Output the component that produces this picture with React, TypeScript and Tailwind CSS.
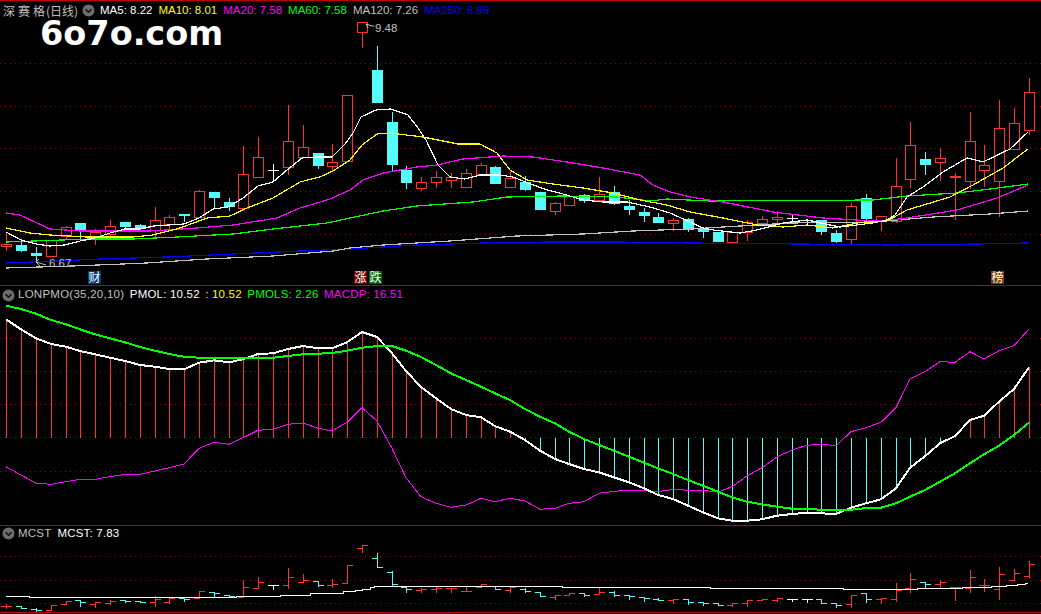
import React from 'react';

const RED = '#ff3232';
const CYAN = '#54fcfc';
const WHITE = '#ffffff';
const GRID = '#8f0000';

const barX = (i: number) => Math.round(6.3 + 14.82 * i);

// [body top, body bottom, wick top, wick bottom, colour]
type Candle = [number, number, number, number, 'r' | 'c' | 'w'];
const candles: Candle[] = [
  [244, 247, 233, 251, 'r'], [245, 251, 239, 252, 'c'], [253, 256, 247, 262, 'c'], [240, 257, 240, 257, 'r'],
  [227, 237, 226, 240, 'r'], [223, 230, 223, 241, 'c'], [232, 237, 229, 245, 'r'], [226, 235, 220, 237, 'r'],
  [222, 227, 222, 231, 'c'], [225, 229, 224, 231, 'c'], [220, 231, 207, 239, 'r'], [217, 225, 215, 229, 'r'],
  [214, 216, 214, 222, 'c'], [191, 218, 190, 218, 'r'], [192, 198, 192, 208, 'c'], [202, 207, 198, 211, 'c'],
  [174, 209, 146, 211, 'r'], [157, 178, 137, 178, 'r'], [170, 170, 164, 182, 'w'], [141, 168, 105, 175, 'r'],
  [147, 158, 125, 158, 'r'], [153, 166, 153, 169, 'c'], [162, 167, 144, 172, 'r'], [95, 162, 95, 162, 'r'],
  [22, 33, 22, 48, 'r'], [70, 103, 46, 103, 'c'], [122, 165, 112, 172, 'c'], [170, 183, 166, 189, 'c'],
  [182, 189, 177, 191, 'r'], [177, 183, 171, 188, 'r'], [177, 181, 173, 188, 'r'], [173, 188, 169, 188, 'r'],
  [165, 175, 163, 175, 'r'], [167, 184, 166, 184, 'c'], [178, 188, 172, 188, 'r'], [182, 190, 176, 191, 'c'],
  [192, 210, 192, 210, 'c'], [203, 212, 202, 215, 'r'], [196, 206, 196, 206, 'r'], [195, 201, 194, 203, 'c'],
  [194, 201, 177, 202, 'r'], [192, 204, 186, 205, 'c'], [206, 210, 200, 215, 'c'], [212, 216, 208, 222, 'c'],
  [217, 223, 213, 223, 'c'], [220, 224, 218, 231, 'r'], [219, 230, 218, 232, 'c'], [229, 232, 227, 238, 'c'],
  [232, 242, 232, 242, 'c'], [232, 243, 232, 243, 'r'], [222, 233, 220, 241, 'r'], [219, 224, 216, 224, 'r'],
  [217, 220, 211, 223, 'r'], [218, 218, 214, 224, 'w'], [220, 220, 220, 224, 'w'], [220, 232, 220, 235, 'c'],
  [233, 242, 230, 243, 'c'], [206, 240, 203, 244, 'r'], [198, 219, 194, 223, 'c'], [216, 221, 216, 231, 'r'],
  [186, 222, 158, 223, 'r'], [145, 180, 122, 188, 'r'], [159, 165, 152, 175, 'c'], [158, 163, 148, 181, 'r'],
  [176, 178, 173, 220, 'r'], [141, 182, 112, 189, 'r'], [165, 171, 145, 187, 'r'], [128, 182, 100, 217, 'r'],
  [123, 150, 108, 150, 'r'], [92, 131, 78, 135, 'r'],
];

const colourOf = (c: string) => (c === 'r' ? RED : c === 'c' ? CYAN : WHITE);

type Pt = [number, number];
const ma5: Pt[] = [[6,232],[21,240],[36,244],[50,246],[65,245],[80,241],[95,238],[110,233],[125,229],[139,229],[154,226],[169,225],[184,224],[199,218],[213,209],[228,207],[243,198],[258,186],[273,182],[287,170],[302,158],[317,157],[332,157],[345,144],[353,133],[361,117],[376,110],[391,109],[408,115],[418,128],[426,140],[438,165],[450,177],[465,179],[480,175],[500,175],[513,177],[528,183],[547,190],[563,194],[583,200],[603,202],[627,202],[650,207],[670,213],[690,222],[703,228],[713,230],[740,233],[757,230],[783,223],[807,220],[830,225],[840,227],[873,223],[887,220],[895,215],[907,197],[923,187],[943,172],[967,158],[983,162],[1010,149],[1028,132]];
const ma10: Pt[] = [[6,228],[30,233],[50,235],[87,237],[133,237],[153,235],[180,228],[207,218],[230,216],[247,208],[273,198],[300,182],[320,177],[333,171],[350,160],[362,145],[377,134],[390,133],[423,137],[458,144],[480,144],[497,153],[510,170],[527,180],[553,184],[583,188],[613,193],[640,200],[667,205],[690,212],[723,218],[757,225],[783,227],[807,225],[833,228],[857,223],[887,221],[907,210],[950,197],[973,185],[1003,168],[1028,149]];
const ma20: Pt[] = [[6,213],[20,215],[37,223],[50,229],[80,231],[150,231],[197,228],[233,225],[277,218],[300,208],[330,199],[350,190],[363,180],[383,173],[417,167],[437,165],[463,159],[503,156],[533,157],[567,162],[603,168],[640,175],[653,185],[670,192],[690,197],[723,202],[773,212],[823,218],[873,221],[900,219],[957,210],[997,198],[1028,185]];
const ma60: Pt[] = [[6,242],[90,239],[133,239],[177,237],[233,234],[273,229],[327,223],[350,218],[383,211],[417,206],[473,202],[507,197],[563,196],[617,197],[650,201],[667,199],[710,201],[873,200],[907,196],[957,193],[990,189],[1028,184]];
const ma120: Pt[] = [[6,268],[73,266],[147,263],[207,259],[273,256],[333,251],[350,248],[383,245],[450,241],[517,236],[583,234],[633,231],[690,229],[790,223],[873,222],[933,217],[990,214],[1028,211]];
const ma250: Pt[] = [[6,263],[33,262],[100,259],[167,257],[233,254],[300,251],[350,249],[417,245],[483,243],[550,242],[617,242],[690,243],[800,244],[890,245],[977,244],[1028,243]];

const pmol = [319.3,329.3,338.3,344,346.7,351,354.3,357.7,361,365,366.7,369,369.3,362.7,360.3,362.3,359.3,354,353.3,349,346,348.3,348.3,342.3,332,337,353.3,371,387,398.3,409,415,417.3,426,431.7,440,450.7,459,464,469,472.3,477.3,482.3,488.3,495,499,505.7,512.3,518.3,520.7,520.7,519.3,515.7,514,512.7,513.3,514,507.7,503.3,499.3,488.3,467.7,456.3,443.3,436,420,415.7,401.7,389,367.3];
const pmols = [305.7,309,313.7,320,324.3,329.3,334.3,338.3,342.3,347,350.7,354,356.7,357.7,358,358,358,357.7,357.7,356,354.3,353.7,353,350.7,347.7,346,346,350.7,357,365,373.3,380,386.7,393.3,400,409,416.7,423.3,431.7,439,445,450.7,456.7,462.7,468.3,474,480,485.7,491.7,497.3,501.7,504.3,506.7,508.7,509,509.7,510,509.7,508,507.7,503.3,496.7,490,481.7,473.3,463.3,454.3,445.7,435,422.7];
const macdp = [466.7,475,483.3,484.3,481.7,479.3,479.3,476.7,474.3,474.3,471,467.7,464,448.3,442.3,444.3,437.7,430.3,429.3,424.3,423,428.3,431,422.3,407.7,421,448.3,477.7,496.7,503.3,507.3,505,498.3,501.7,498.3,501,509.3,508.3,503.3,501.7,493.3,491.3,490.3,490.3,491.7,489.3,490.3,490.3,492,486.7,476,467.7,457,450,445.3,444.3,445.7,431.7,427.7,422.3,407.7,379,371.7,361.7,362.3,351.7,359,350.7,345.7,329];

// MCST bars, as zoomed offsets from y=525: [left tick, right tick, top, bottom, colour]
type Step = [number, number, number, number, 'r' | 'c' | 'w'];
const steps: Step[] = [
  [244,244,237,250,'r'],[243,250,243,250,'c'],[252,255,250,260,'c'],[254,240,240,254,'r'],[238,229,229,238,'r'],[226,232,226,243,'c'],
  [238,232,232,245,'r'],[234,228,226,237,'r'],[226,229,226,232,'c'],[229,232,229,232,'c'],[232,222,214,242,'r'],[231,220,218,234,'r'],
  [220,221,220,228,'c'],[220,199,199,220,'r'],[202,205,202,217,'c'],[209,214,209,214,'c'],[217,187,165,217,'r'],[190,172,156,190,'r'],
  [181,181,181,192,'w'],[181,157,129,188,'r'],[172,166,148,172,'r'],[169,181,169,183,'c'],[181,176,162,186,'r'],[175,121,121,175,'r'],
  [70,61,61,82,'r'],[100,127,85,127,'c'],[142,178,138,182,'c'],[187,193,185,200,'c'],[196,193,190,200,'r'],[193,190,186,200,'r'],
  [190,190,190,200,'r'],[198,198,185,198,'r'],[187,178,178,187,'r'],[182,193,182,193,'c'],[196,187,185,200,'r'],[192,199,190,201,'c'],
  [202,214,202,214,'c'],[217,211,211,221,'r'],[211,205,205,211,'r'],[205,209,205,212,'c'],[208,202,188,208,'r'],[201,211,199,212,'c'],
  [211,214,211,221,'c'],[217,220,217,228,'c'],[223,226,220,226,'c'],[226,223,223,233,'r'],[223,232,223,236,'c'],[232,235,232,239,'c'],
  [235,241,235,241,'c'],[241,235,235,244,'r'],[235,226,226,242,'r'],[226,223,223,226,'r'],[226,220,220,228,'r'],[223,223,223,228,'w'],
  [223,223,223,231,'w'],[223,235,223,235,'c'],[235,241,235,245,'c'],[238,211,211,245,'r'],[205,223,205,231,'c'],[223,220,220,233,'r'],
  [223,196,175,228,'r'],[190,163,145,200,'r'],[172,178,172,190,'c'],[178,172,166,190,'r'],[187,187,187,224,'r'],[190,157,136,200,'r'],
  [181,181,163,198,'r'],[193,148,127,221,'r'],[166,145,133,166,'r'],[152,118,109,155,'r'],
];
const mcst: Pt[] = [[6,596],[29,596],[29,597],[236,597],[236,596.5],[266,596.5],[266,596],[280,596],[280,595],[310,595],[310,593],[343,593],[343,591],[355,591],[355,590],[362,590],[362,589],[370,589],[370,587],[374,587],[374,586],[562,586],[562,587],[710,587],[710,588],[843,588],[843,589],[917,589],[917,588],[962,588],[962,587],[991,587],[991,586],[1006,586],[1006,585],[1017,585],[1017,584],[1025,584],[1025,583],[1028,583]];

const toLine = (pts: Pt[]) => pts.map((p) => p.join(',')).join(' ');
const byBar = (ys: number[]) => toLine(ys.map((y, i) => [barX(i), y] as Pt));

function Grid({ ys }: { ys: number[] }) {
  return (
    <>
      {ys.map((y) => (
        <line key={y} x1={0} x2={1041} y1={y + 0.5} y2={y + 0.5} stroke={GRID} strokeDasharray="1 4" shapeRendering="crispEdges" />
      ))}
    </>
  );
}

function Chevron() {
  return (
    <svg width="13" height="13" viewBox="0 0 13 13" className="shrink-0">
      <circle cx="6.5" cy="6.5" r="6" fill="#6e6e6e" />
      <path d="M3.5 5.2 L6.5 8.2 L9.5 5.2" fill="none" stroke="#111" strokeWidth="1.6" />
    </svg>
  );
}

function Tag({ text, bg, x }: { text: string; bg: string; x: number }) {
  return (
    <g>
      <rect x={x} y={271} width={13} height={13} fill={bg} />
      <text x={x + 6.5} y={282} textAnchor="middle" fontSize="12" fill="#fff" fontFamily="'Noto Sans CJK SC', sans-serif">{text}</text>
    </g>
  );
}

function MainChart() {
  return (
    <svg className="absolute inset-0" width="1041" height="284" viewBox="0 1 1041 284">
      <Grid ys={[63, 106, 148, 191, 234]} />
      {candles.map(([top, bottom, wickTop, wickBottom, c], i) => {
        const x = barX(i);
        const col = colourOf(c);
        return (
          <g key={i} shapeRendering="crispEdges">
            <line x1={x + 0.5} x2={x + 0.5} y1={wickTop} y2={wickBottom} stroke={col} />
            {c === 'w' ? (
              <line x1={x - 5} x2={x + 6} y1={top + 0.5} y2={top + 0.5} stroke={col} />
            ) : (
              <rect
                x={c === 'r' ? x - 4.5 : x - 5}
                y={c === 'r' ? top + 0.5 : top}
                width={c === 'r' ? 10 : 11}
                height={c === 'r' ? Math.max(bottom - top - 1, 1) : bottom - top}
                fill={c === 'r' ? '#000' : col}
                stroke={c === 'r' ? col : 'none'}
              />
            )}
          </g>
        );
      })}
      <g fill="none" shapeRendering="crispEdges" strokeWidth="1.2">
        <polyline points={toLine(ma250)} stroke="#0000ff" />
        <polyline points={toLine(ma120)} stroke="#c0c0c0" />
        <polyline points={toLine(ma60)} stroke="#00ff00" />
        <polyline points={toLine(ma20)} stroke="#ff00ff" />
        <polyline points={toLine(ma10)} stroke="#ffff00" />
        <polyline points={toLine(ma5)} stroke="#ffffff" />
      </g>
      <path d="M366 24 L372 26 M366 24 L368 28 M372 26 L374 26" stroke="#c0c0c0" fill="none" />
      <text x="375" y="32" fontSize="11.5" fill="#c0c0c0" fontFamily="'Liberation Sans', sans-serif">9.48</text>
      <path d="M36 262 L40 266 M36 262 L39 259 M36 262 L46 265" stroke="#c0c0c0" fill="none" />
      <text x="49" y="267" fontSize="11.5" fill="#c0c0c0" fontFamily="'Liberation Sans', sans-serif">6.67</text>
      <Tag text="财" bg="#003c78" x={88} />
      <Tag text="涨" bg="#800000" x={354} />
      <Tag text="跌" bg="#006400" x={369} />
      <Tag text="榜" bg="#7a3c00" x={991} />
    </svg>
  );
}

function PmoChart() {
  return (
    <svg className="absolute inset-0" width="1041" height="238" viewBox="0 286 1041 238">
      <Grid ys={[338, 371, 404, 437, 471]} />
      <g shapeRendering="crispEdges">
        {pmol.map((y, i) => {
          const x = barX(i) + 0.5;
          return <line key={i} x1={x} x2={x} y1={438} y2={y} stroke={y < 437 ? RED : CYAN} />;
        })}
      </g>
      <g fill="none" shapeRendering="crispEdges">
        <polyline points={byBar(macdp)} stroke="#ff00ff" strokeWidth="1" />
        <polyline points={byBar(pmol)} stroke="#ffffff" strokeWidth="2" />
        <polyline points={byBar(pmols)} stroke="#00ff00" strokeWidth="2" />
      </g>
    </svg>
  );
}

function McstChart() {
  return (
    <svg className="absolute inset-0" width="1041" height="86" viewBox="0 526 1041 86">
      <Grid ys={[556, 580, 603]} />
      <g shapeRendering="crispEdges">
        {steps.map(([l, r, t, b, c], i) => {
          const x = barX(i);
          const col = colourOf(c);
          const px = (v: number) => Math.round(525 + v / 3) + 0.5;
          return (
            <g key={i} stroke={col} fill="none">
              <line x1={x - 5} x2={x + 1} y1={px(l)} y2={px(l)} />
              <line x1={x} x2={x + 6} y1={px(r)} y2={px(r)} />
              <line x1={x + 0.5} x2={x + 0.5} y1={px(t) - 0.5} y2={px(b) + 0.5} />
            </g>
          );
        })}
        <polyline points={toLine(mcst)} fill="none" stroke="#ffffff" strokeWidth="1" />
      </g>
    </svg>
  );
}

function Label({ color, children }: { color: string; children: React.ReactNode }) {
  return <span style={{ color }}>{children}</span>;
}

export default function App() {
  return (
    <div className="w-[1041px] h-[614px] bg-black overflow-hidden flex flex-col text-[11.5px] leading-none font-['Liberation_Sans',sans-serif]">
      {/* candles */}
      <section className="relative h-[285px] border-t-[1px] border-[#c00000]">
        <MainChart />
        <div className="relative flex items-center h-[17px] mt-[1px] pl-[3px]">
          <span className="flex w-[79px] text-[#c0c0c0] text-[12px] leading-none whitespace-nowrap font-['Noto_Sans_CJK_SC',sans-serif]">
            <span className="tracking-[3px]">深赛格</span>
            <span className="-ml-[2px]">(日线)</span>
          </span>
          <Chevron />
          <div className="flex items-center gap-[6px] ml-[5px]">
            <Label color="#ffffff">MA5: 8.22</Label>
            <Label color="#ffff00">MA10: 8.01</Label>
            <Label color="#ff00ff">MA20: 7.58</Label>
            <Label color="#00ff00">MA60: 7.58</Label>
            <Label color="#c0c0c0">MA120: 7.26</Label>
            <Label color="#0000ff">MA250: 6.89</Label>
          </div>
        </div>
        <div className="absolute left-[40px] top-[19px] text-white text-[33.5px] leading-[28px] font-bold font-['DejaVu_Sans',sans-serif]">6o7o.com</div>
      </section>

      {/* LONPMO */}
      <section className="relative h-[240px] border-t-[1px] border-[#c00000]">
        <PmoChart />
        <div className="relative flex items-center h-[18px] pl-[2px] gap-[5.5px] tracking-[0.2px]">
          <Chevron />
          <span className="text-[#c0c0c0] -ml-[2.5px] tracking-[0.25px]">LONPMO(35,20,10)</span>
          <Label color="#ffffff">PMOL: 10.52</Label>
          <Label color="#ffff00">: 10.52</Label>
          <Label color="#00ff00">PMOLS: 2.26</Label>
          <Label color="#ff00ff">MACDP: 16.51</Label>
        </div>
      </section>

      {/* MCST */}
      <section className="relative h-[87px] border-t-[1px] border-[#c00000]">
        <McstChart />
        <div className="relative flex items-center h-[15px] pl-[2px] gap-[6px] tracking-[0.2px]">
          <Chevron />
          <span className="text-[#c0c0c0] -ml-[3px]">MCST</span>
          <Label color="#ffffff">MCST: 7.83</Label>
        </div>
      </section>

      {/* time axis */}
      <div className="h-[2px] border-t-[1px] border-[#c00000] flex">
        <div className="ml-[375px] w-[77px] h-[1px] bg-[#0000c0]" />
      </div>
    </div>
  );
}
